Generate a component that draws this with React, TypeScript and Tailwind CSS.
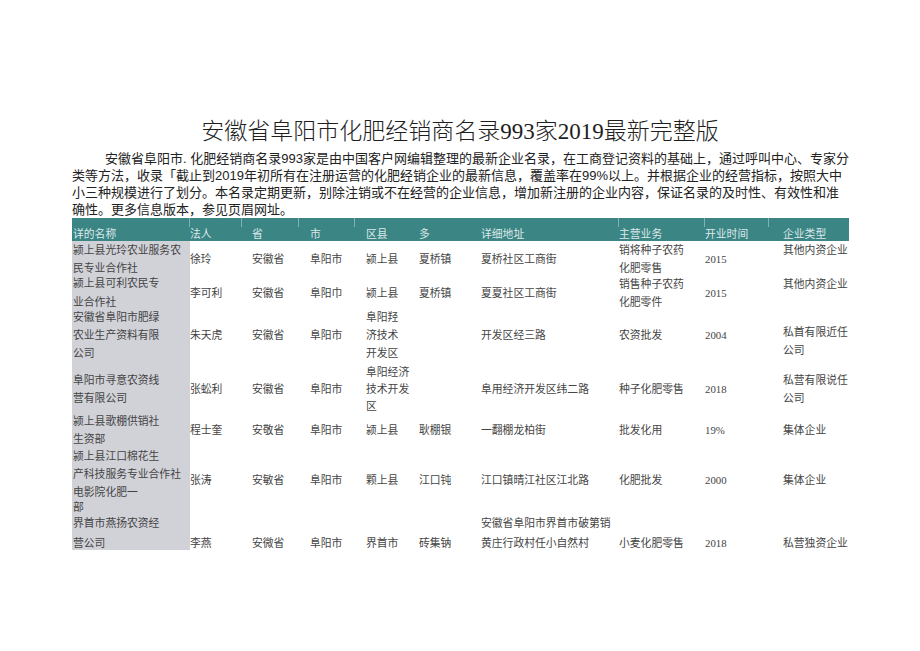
import React from "react";

type Cell = { l: string[]; c?: string; lc?: string };
type Row = { h: string; align: string; pad: string; cells: Cell[] };

const colW = [
  "w-[118px]",
  "w-[62px]",
  "w-[58px]",
  "w-[56px]",
  "w-[53px]",
  "w-[62px]",
  "w-[138px]",
  "w-[86px]",
  "w-[78px]",
  "w-[66px]",
];

const headers = ["详的名称", "法人", "省", "市", "区县", "多", "详细地址", "主营业务", "开业时间", "企业类型"];

const c = (l: string[] | string, cls?: string, lc?: string): Cell => ({
  l: Array.isArray(l) ? l : [l],
  c: cls,
  lc,
});

const L20 = "h-[20px] leading-[20px]";
const M3 = "-mb-[3px]";

const rows: Row[] = [
  {
    h: "h-[35px]",
    align: "items-center",
    pad: "",
    cells: [
      c(["颍上县光玲农业服务农", "民专业合作社"]),
      c("徐玲"),
      c("安徽省"),
      c("阜阳市"),
      c("颍上县"),
      c("夏桥镇"),
      c("夏桥社区工商街"),
      c(["销将种子农药", "化肥零售"]),
      c("2015"),
      c(["其他内资企业", ""]),
    ],
  },
  {
    h: "h-[34px]",
    align: "items-center",
    pad: "",
    cells: [
      c(["颍上县可利农民专", "业合作社"], "", "h-[19px] leading-[19px]"),
      c("李可利"),
      c("安徽省"),
      c("阜阳巾"),
      c("颍上县"),
      c("夏桥镇"),
      c("夏夏社区工商街"),
      c(["销售种子农药", "化肥零件"]),
      c("2015"),
      c(["其他内资企业", ""]),
    ],
  },
  {
    h: "h-[50px]",
    align: "items-center",
    pad: "",
    cells: [
      c(["安徽省阜阳市肥绿", "农业生产资料有限", "公司"]),
      c("朱天虎"),
      c("安徽省"),
      c("阜阳市"),
      c(["阜阳羟", "济技术", "开发区"]),
      c([""]),
      c("开发区经三路"),
      c("农资批发"),
      c("2004"),
      c(["私首有限近任", "公司"], "pt-[12px]"),
    ],
  },
  {
    h: "h-[58px]",
    align: "items-center",
    pad: "",
    cells: [
      c(["阜阳市寻意农资线", "营有限公司"]),
      c("张蚣利"),
      c("安徽省"),
      c("阜阳市"),
      c(["阜阳经济", "技术开发", "区"], "", "h-[17px] leading-[17px]"),
      c([""]),
      c("阜用经济开发区纬二路"),
      c("种子化肥零售"),
      c("2018"),
      c(["私营有限说任", "公司"]),
    ],
  },
  {
    h: "h-[23px]",
    align: "items-center",
    pad: "",
    cells: [
      c(["颍上县歌棚供销社", "生资部"]),
      c("程士奎"),
      c("安敬省"),
      c("阜阳市"),
      c("颍上县"),
      c("耿棚银"),
      c("一翻棚龙柏街"),
      c("批发化用"),
      c("19%"),
      c("集体企业"),
    ],
  },
  {
    h: "h-[73px]",
    align: "items-center",
    pad: "pt-[5px]",
    cells: [
      { l: ["颍上县江口棉花生", "产科技服务专业合作社", "电影院化肥一", "部"], c: "", lc: "last" },
      c("张涛"),
      c("安敏省"),
      c("阜阳市"),
      c("颗上县"),
      c("江口钝"),
      c("江口镇晴江社区江北路"),
      c("化肥批发"),
      c("2000"),
      c("集体企业"),
    ],
  },
  {
    h: "h-[36px]",
    align: "items-end",
    pad: "",
    cells: [
      c(["界首市燕扬农资经", "营公司"], M3, L20),
      c("李燕", M3, L20),
      c("安微省", M3, L20),
      c("阜阳市", M3, L20),
      c("界首市", M3, L20),
      c("砖集钠", M3, L20),
      c(["安徽省阜阳市界首市破第销", "黄庄行政村任小自然村"], M3, L20),
      c("小麦化肥零售", M3, L20),
      c("2018", M3, L20),
      c("私营独资企业", M3, L20),
    ],
  },
];

const serif = { fontFamily: '"Liberation Serif", "Noto Sans CJK SC", serif' };

export default function App() {
  const sepW = ["w-[117px]", "w-[52px]", "w-[57px]", "w-[56px]", "w-[264px]", "w-[86px]", "w-[64px]", "w-[81px]"];
  return (
    <div className="w-[920px] min-h-[651px] bg-white text-[#222]">
      <div className="pt-[118px]">
        <div
          className="h-[28px] leading-[28px] text-[23px] font-light text-center text-[#1e1e1e] whitespace-nowrap"
          style={serif}
        >
          安徽省阜阳市化肥经销商名录993家2019最新完整版
        </div>
        <div className="ml-[72px] w-[777px] mt-[4px]">
          <div
            className="text-[13px] text-[#222]"
            style={{ fontFamily: '"Liberation Sans", "Noto Sans CJK SC", sans-serif' }}
          >
            <div className="h-[17px] leading-[17px] pl-[33px] whitespace-nowrap">
              安徽省阜阳市. 化肥经销商名录993家是由中国客户网编辑整理的最新企业名录，在工商登记资料的基础上，通过呼叫中心、专家分
            </div>
            <div className="h-[17px] leading-[17px] whitespace-nowrap">
              类等方法，收录「截止到2019年初所有在注册运营的化肥经销企业的最新信息，覆盖率在99%以上。并根据企业的经营指标，按照大中
            </div>
            <div className="h-[17px] leading-[17px] whitespace-nowrap">
              小三种规模进行了划分。本名录定期更新，别除注销或不在经营的企业信息，增加新注册的企业内容，保证名录的及时性、有效性和准
            </div>
            <div className="h-[17px] leading-[17px] whitespace-nowrap">确性。更多信息版本，参见页眉网址。</div>
          </div>

          <div className="text-[10.8px] text-[#444]" style={serif}>
            <div className="bg-[#3b8585] h-[23px] flex flex-col">
              <div className="flex h-[9px]">
                {sepW.map((w, i) => (
                  <div key={i} className={`${w} shrink-0 ${i > 0 ? "border-l border-[#7fb3b3]" : ""}`} />
                ))}
              </div>
              <div className="flex h-[14px] leading-[14px] text-[#dde9e9]">
                {headers.map((h, i) => (
                  <div key={i} className={`${colW[i]} shrink-0 whitespace-nowrap ${i === 0 ? "pl-[1px]" : ""}`}>
                    {h}
                  </div>
                ))}
              </div>
            </div>
            {rows.map((r, ri) => (
              <div key={ri} className={`flex ${r.h}`}>
                {r.cells.map((cell, ci) => (
                  <div
                    key={ci}
                    className={`${colW[ci]} shrink-0 flex ${r.align} ${r.pad} ${ci === 0 ? "bg-[#d1d2d8] pl-[1px]" : ""}`}
                  >
                    <div className={`relative ${cell.c || ""}`}>
                      {cell.l.map((t, i) => {
                        let lc = "h-[18px] leading-[18px]";
                        if (cell.lc === "last") {
                          lc = i === cell.l.length - 1 ? "h-[12px] leading-[12px]" : "h-[18px] leading-[18px]";
                        } else if (cell.lc) {
                          lc = cell.lc;
                        }
                        return (
                          <div key={i} className={`${lc} whitespace-nowrap`}>
                            {t || "\u00a0"}
                          </div>
                        );
                      })}
                    </div>
                  </div>
                ))}
              </div>
            ))}
          </div>
        </div>
      </div>
    </div>
  );
}
